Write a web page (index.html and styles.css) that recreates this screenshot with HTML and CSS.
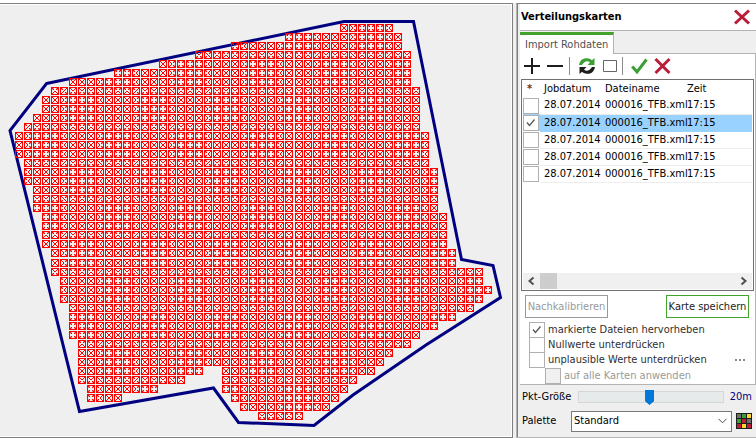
FILE: index.html
```html
<!DOCTYPE html>
<html lang="de">
<head>
<meta charset="utf-8">
<title>Verteilungskarten</title>
<link rel="stylesheet" href="styles.css">
</head>
<body>
<div class="app">
  <main class="map">
    <svg id="field" viewBox="0 5 511 431" preserveAspectRatio="xMinYMin meet" role="img" aria-label="Feldkarte">
      <path class="boundary" d="M46.500 83.500 L344 21.500 H413.500 L461.500 259.500 L493 265.500 L500.500 297.500 L426 345 L353 395 L314 425.500 L238.500 422.500 L213.500 388 L79.500 411.500 L10 130.500 Z"/>
    </svg>
  </main>
  <aside class="panel">
    <header class="panel-head">
      <h1>Verteilungskarten</h1>
      <button class="icon-btn" type="button" aria-label="Schließen"><svg width="18" height="16" viewBox="0 0 18 16"><path class="cross" d="M2 1.500 L16 14.500 M16 1.500 L2 14.500"/></svg></button>
    </header>
    <nav class="tabs"><button class="tab" type="button">Import Rohdaten</button></nav>
    <section class="page">
      <div class="toolbar">
        <button class="icon-btn" type="button" aria-label="Hinzufügen"><svg width="17" height="18" viewBox="0 0 17 18"><path class="ink" d="M8 1 V17 M0 9 H16"/></svg></button>
        <button class="icon-btn minus" type="button" aria-label="Entfernen"><svg width="17" height="18" viewBox="0 0 17 18"><path class="ink" d="M0 9 H16"/></svg></button>
        <span class="sep"></span>
        <button class="icon-btn" type="button" aria-label="Aktualisieren"><svg width="18" height="18" viewBox="0 0 18 18"><path d="M1 8 C2 3 5 1 9 1.200 C11.500 1.300 13 2.200 14 3.200 L16.500 1 V8 H9.500 L12 5.500 C9.500 3 6 4.500 4 8 Z" fill="#3c9f35"/><path d="M17 10 C16 15 13 17 9 16.800 C6.500 16.700 5 15.800 4 14.800 L1.500 17 V10 H8.500 L6 12.500 C8.500 15 12 13.500 14 10 Z" fill="#1d1d1b"/></svg></button>
        <button class="icon-btn frame" type="button" aria-label="Rahmen"><svg width="14" height="18" viewBox="0 0 14 18"><path d="M0.500 3.500 H13.500 V14.500 H0.500 Z" fill="#fff" stroke="#666"/></svg></button>
        <span class="sep"></span>
        <button class="icon-btn ok" type="button" aria-label="Übernehmen"><svg width="17" height="18" viewBox="0 0 17 18"><path d="M1.200 9.500 L6 14.800 L15.500 2.500" fill="none" stroke="#3c9f35" stroke-width="3"/></svg></button>
        <button class="icon-btn" type="button" aria-label="Verwerfen"><svg width="17" height="18" viewBox="0 0 17 18"><path class="cross" d="M1.500 2 L15.500 16 M15.500 2 L1.500 16"/></svg></button>
      </div>
      <div class="list">
        <table>
          <colgroup><col class="c-mark"><col class="c-date"><col class="c-file"><col></colgroup>
          <thead><tr><th class="star">*</th><th>Jobdatum</th><th>Dateiname</th><th>Zeit</th></tr></thead>
          <tbody>
            <tr><td><input type="checkbox" aria-label="Zeile 1"></td><td>28.07.2014</td><td>000016_TFB.xml</td><td>17:15</td></tr>
            <tr class="selected"><td><input type="checkbox" aria-label="Zeile 2" checked></td><td>28.07.2014</td><td>000016_TFB.xml</td><td>17:15</td></tr>
            <tr><td><input type="checkbox" aria-label="Zeile 3"></td><td>28.07.2014</td><td>000016_TFB.xml</td><td>17:15</td></tr>
            <tr><td><input type="checkbox" aria-label="Zeile 4"></td><td>28.07.2014</td><td>000016_TFB.xml</td><td>17:15</td></tr>
            <tr><td><input type="checkbox" aria-label="Zeile 5"></td><td>28.07.2014</td><td>000016_TFB.xml</td><td>17:15</td></tr>
          </tbody>
        </table>
        <div class="scrollbar">
          <button class="icon-btn" type="button" aria-label="Nach links"><svg width="17" height="16" viewBox="0 0 17 16"><path class="arrow" d="M10.500 4.500 L6.500 8 L10.500 11.500"/></svg></button>
          <span class="thumb"></span>
          <button class="icon-btn" type="button" aria-label="Nach rechts"><svg width="17" height="16" viewBox="0 0 17 16"><path class="arrow" d="M6.500 4.500 L10.500 8 L6.500 11.500"/></svg></button>
        </div>
      </div>
      <div class="actions">
        <button type="button" disabled>Nachkalibrieren</button>
        <button type="button" class="save">Karte speichern</button>
      </div>
      <div class="options">
        <label><input type="checkbox" checked>markierte Dateien hervorheben</label>
        <label><input type="checkbox">Nullwerte unterdrücken</label>
        <div class="option-row">
          <label><input type="checkbox">unplausible Werte unterdrücken</label>
          <button class="icon-btn" type="button" aria-label="Mehr"><svg width="11" height="4" viewBox="0 0 11 4"><path d="M0 1h2v2H0zM4 1h2v2H4zM8 1h2v2H8z" fill="#8c8c8c"/></svg></button>
        </div>
        <label class="nested"><input type="checkbox" disabled>auf alle Karten anwenden</label>
      </div>
    </section>
    <div class="field-row size-row">
      <label for="size">Pkt-Größe</label>
      <input type="range" id="size" min="0" max="100" value="49">
      <output for="size">20m</output>
    </div>
    <div class="field-row palette-row">
      <label for="palette">Palette</label>
      <select id="palette"><option>Standard</option></select>
      <button class="icon-btn" type="button" aria-label="Palette bearbeiten"><svg width="16" height="16" viewBox="0 0 16 16"><path d="M0 0h16v16H0z" fill="#1d1d1b"/><path d="M1 1h4v4H1zM11 6h4v4h-4z" fill="#706f6f"/><path d="M6 1h4v4H6zM1 6h4v4H1z" fill="#3c9f35"/><path d="M11 1h4v4h-4zM6 11h4v4H6z" fill="#ffd92f"/><path d="M6 6h4v4H6zM1 11h4v4H1zM11 11h4v4h-4z" fill="#b91d3a"/></svg></button>
    </div>
  </aside>
</div>
<script src="map.js"></script>
</body>
</html>
```
FILE: styles.css
```css
* { box-sizing: border-box; }

body {
  margin: 0;
  background: #fff;
  color: #000;
  font: 11px/14px "DejaVu Sans Condensed", "DejaVu Sans", sans-serif;
}

button, input, select { font: inherit; color: inherit; margin: 0; }

.app {
  display: grid;
  grid-template-columns: 1fr 240px;
  gap: 3px;
  min-height: 100vh;
  padding-top: 3px;
  background: linear-gradient(#fff 3px, #efefef 3px);
}

.map {
  border: 1px solid #7f7f7f;
  border-left: 0;
  box-shadow: inset -1px 1px #fff, inset 0 -1px #fff;
  padding: 1px 1px 1px 0;
  background: #efefef;
}
.map svg { display: block; width: 100%; }
.boundary { fill: none; stroke: #000080; stroke-width: 3; }
.cell { fill: #f00; shape-rendering: crispEdges; }
.halo { fill: #f00; fill-opacity: 0.4; shape-rendering: crispEdges; }

.panel {
  display: flex;
  flex-direction: column;
  border: 1px solid #b4b4b4;
  border-top-color: #7f7f7f;
  border-right: 0;
  box-shadow: inset 1px 0 #7f7f7f;
  padding-left: 3px;
}

.panel-head {
  display: flex;
  align-items: center;
  justify-content: space-between;
  height: 27px;
  padding: 0 5px 0 1px;
  background: #fff;
  border-bottom: 1px solid #b4b4b4;
}
.panel-head h1 { margin: 0; font-size: 11px; font-weight: bold; }

.icon-btn { display: block; padding: 0; border: 0; background: none; }
.icon-btn svg { display: block; }
.cross { fill: none; stroke: #b91d3a; stroke-width: 3; }
.ink { fill: none; stroke: #1d1d1b; stroke-width: 2; }
.arrow { fill: none; stroke: #505050; stroke-width: 2; }

.tabs { display: flex; padding-top: 1px; border-bottom: 1px solid #b4b4b4; }
.tab {
  height: 22px;
  margin-bottom: -1px;
  padding: 1px 5px 0;
  border: 0;
  border-top: 3px solid #44a12b;
  border-right: 1px solid #b4b4b4;
  background: #fff;
  color: #505050;
}

.page {
  padding: 3px 1px 0;
  background: #fff;
  border-right: 1px solid #b4b4b4;
  border-bottom: 1px solid #b4b4b4;
}

.toolbar { display: flex; align-items: center; height: 18px; padding-left: 3px; }
.minus { margin-left: 6px; }
.sep { width: 1px; height: 18px; margin: 0 8px 0 5px; background: #8c8c8c; }
.frame { margin: 0 0 0 7px; }
.ok { margin-right: 6px; }

.list {
  display: flex;
  flex-direction: column;
  height: 212px;
  margin-top: 4px;
  padding: 0 1px 1px;
  border: 1px solid #707070;
}
table { width: 100%; border-collapse: collapse; table-layout: fixed; }
.c-mark { width: 17px; }
.c-date { width: 61px; }
.c-file { width: 82px; }
th, td {
  height: 17px;
  padding: 0 0 0 4px;
  text-align: left;
  font-weight: normal;
  line-height: 16px;
  white-space: nowrap;
}
td { border-bottom: 1px solid #ededed; }
td:first-child { padding: 0; border: 0; }
.star { font-weight: bold; color: #803000; }
.selected td { background: #99d1ff; border-color: #99d1ff; }

input[type="checkbox"] {
  appearance: none;
  display: block;
  flex: none;
  width: 16px;
  height: 16px;
  border: 1px solid #b0b0b0;
  background: #fff;
}
input[type="checkbox"]:checked {
  background: #fff url("data:image/svg+xml,%3Csvg xmlns='http://www.w3.org/2000/svg' viewBox='0 0 14 14'%3E%3Cpath d='M3 6.500 L5.500 9.500 L10.500 3.500' fill='none' stroke='%23555' stroke-width='1.300'/%3E%3C/svg%3E");
}
input[type="checkbox"]:disabled { background: #f0f0f0; }

.scrollbar { display: flex; height: 16px; margin-top: auto; background: #f0f0f0; }
.scrollbar .thumb { width: 17px; margin-right: auto; background: #cdcdcd; }

.actions { display: flex; justify-content: space-between; margin-top: 4px; padding: 0 5px 0 4px; }
.actions button { width: 83px; height: 23px; padding: 0; border: 1px solid #999; background: #fff; white-space: nowrap; }
.actions button:disabled { color: #999; }
.actions .save { border-color: #44a12b; color: #1d1d1b; }

.options { margin-top: 4px; padding: 0 8px; }
.options label { display: flex; align-items: center; gap: 3px; height: 15px; color: #303030; white-space: nowrap; }
.option-row { display: flex; align-items: center; justify-content: space-between; }
.options .nested { height: 16px; margin: 1px 0 0 16px; color: #999; }

.field-row { display: flex; align-items: center; padding: 0 4px 0 2px; }
.field-row label { width: 49px; white-space: nowrap; }
.size-row { height: 24px; }
.size-row label { width: 56px; }
.size-row output { margin-left: 6px; color: #000080; }
.palette-row { height: 24px; }

input[type="range"] {
  appearance: none;
  flex: 1;
  min-width: 0;
  height: 16px;
  background: none;
}
input[type="range"]::-webkit-slider-runnable-track { height: 12px; border: 1px solid #d6d6d6; background: #e7eaea; }
input[type="range"]::-webkit-slider-thumb {
  appearance: none;
  width: 9px;
  height: 15px;
  margin-top: -2px;
  background: #0078d7;
  clip-path: polygon(0 0, 100% 0, 100% 75%, 50% 100%, 0 75%);
}

select {
  appearance: none;
  flex: 1;
  min-width: 0;
  height: 21px;
  margin-right: 4px;
  padding: 0 2px;
  border: 1px solid #7a7a7a;
  border-radius: 0;
  background: #fff url("data:image/svg+xml,%3Csvg xmlns='http://www.w3.org/2000/svg' viewBox='0 0 9 6'%3E%3Cpath d='M0.500 0.800 L4.500 4.800 L8.500 0.800' fill='none' stroke='%23505050'/%3E%3C/svg%3E") right 4px center / 9px 6px no-repeat;
}
```
FILE: map.js
```js
// Occupied columns of each sample row, as [first, last] ranges.
const rows = [
  [[36, 41]], [[30, 42]], [[24, 42]], [[20, 43]], [[16, 43]], [[11, 43]],
  [[6, 43]], [[4, 44]], [[3, 44]], [[3, 44]], [[2, 44]], [[1, 44]],
  [[0, 45]], [[0, 45]], [[0, 45]], [[1, 45]], [[1, 46]], [[1, 46]],
  [[2, 46]], [[2, 46]], [[2, 46]], [[3, 47]], [[3, 47]], [[3, 47]],
  [[3, 47]], [[4, 48]], [[4, 48]], [[4, 51]], [[5, 51]], [[5, 52]],
  [[5, 51]], [[6, 50]], [[6, 48]], [[6, 46]], [[6, 44]], [[7, 43]],
  [[7, 41]], [[7, 40]], [[7, 20], [23, 39]], [[7, 18], [23, 37]],
  [[8, 15], [23, 36]], [[8, 11], [24, 35]], [[25, 34]], [[27, 31]]
];

const px = (x, y) => `M${x} ${y}h1v1h-1z`;
// The marker strokes thin out in bands of four cells.
const band = n => Math.floor(n / 4) & 1;

let solid = "";
let halo = "";

function drawCell(col, row) {
  const x = 15 + 9 * col + (col > 30 ? 1 : 0);
  const y = 24 + 9 * row + (row > 25 ? 1 : 0);
  solid += `M${x} ${y}h8v8h-8zM${x + 1} ${y + 1}v6h6v-6z`;
  for (const right of [0, 1]) {
    for (const low of [0, 1]) {
      const long = band(col + 2 + right) ^ band(row + low);
      const at = (i, j) => px(right ? x + 7 - i : x + i, low ? y + 7 - j : y + j);
      solid += at(1, 1) + at(2, 2);
      if (long) {
        solid += at(3, 3);
      } else {
        halo += at(1, 2) + at(2, 1);
      }
    }
  }
}

rows.forEach((ranges, row) => {
  for (const [first, last] of ranges) {
    for (let col = first; col <= last; col++) drawCell(col, row);
  }
});

const field = document.getElementById("field");
for (const [name, d] of [["halo", halo], ["cell", solid]]) {
  const path = document.createElementNS("http://www.w3.org/2000/svg", "path");
  path.setAttribute("class", name);
  path.setAttribute("fill-rule", "nonzero");
  path.setAttribute("d", d);
  field.append(path);
}
```
